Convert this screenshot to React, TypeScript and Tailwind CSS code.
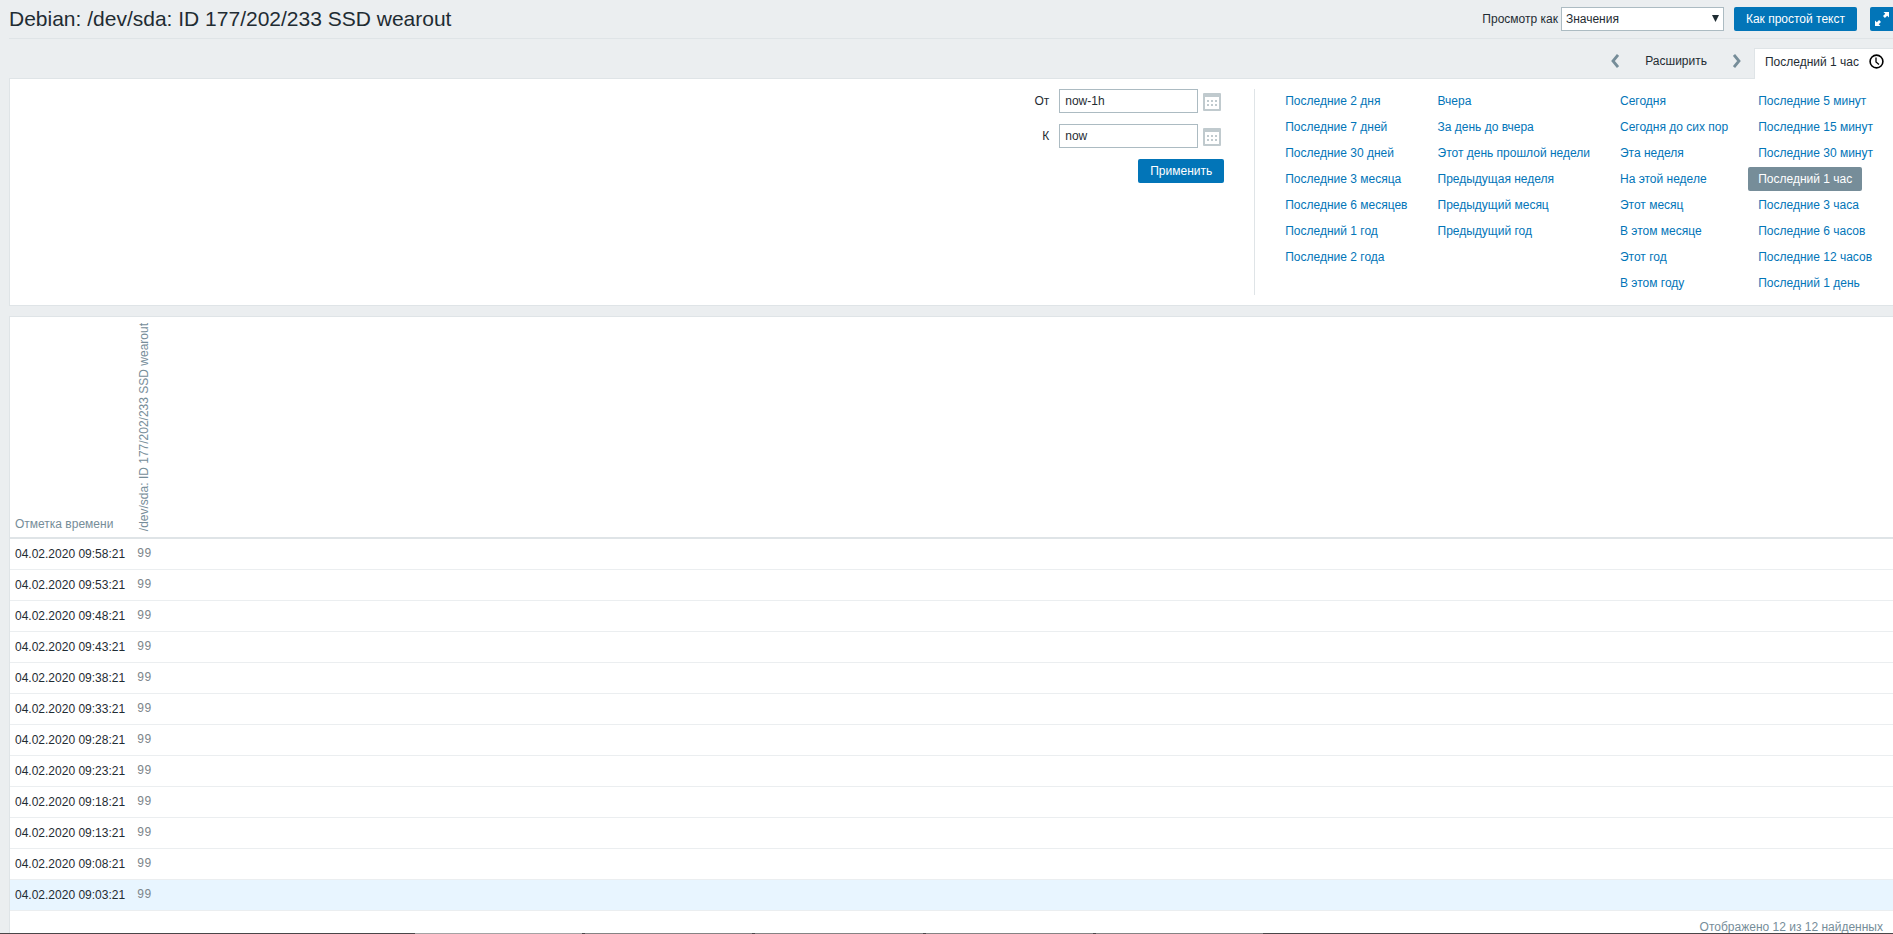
import type { ReactNode } from "react";

const ranges: string[][] = [
  [
    "Последние 2 дня",
    "Последние 7 дней",
    "Последние 30 дней",
    "Последние 3 месяца",
    "Последние 6 месяцев",
    "Последний 1 год",
    "Последние 2 года",
  ],
  [
    "Вчера",
    "За день до вчера",
    "Этот день прошлой недели",
    "Предыдущая неделя",
    "Предыдущий месяц",
    "Предыдущий год",
  ],
  [
    "Сегодня",
    "Сегодня до сих пор",
    "Эта неделя",
    "На этой неделе",
    "Этот месяц",
    "В этом месяце",
    "Этот год",
    "В этом году",
  ],
  [
    "Последние 5 минут",
    "Последние 15 минут",
    "Последние 30 минут",
    "Последний 1 час",
    "Последние 3 часа",
    "Последние 6 часов",
    "Последние 12 часов",
    "Последний 1 день",
  ],
];

const selectedRange = "Последний 1 час";

const rows = [
  "09:58:21",
  "09:53:21",
  "09:48:21",
  "09:43:21",
  "09:38:21",
  "09:33:21",
  "09:28:21",
  "09:23:21",
  "09:18:21",
  "09:13:21",
  "09:08:21",
  "09:03:21",
].map((time) => ({ clock: `04.02.2020 ${time}`, value: "99" }));

const CalendarIcon = () => (
  <svg width="18" height="18" viewBox="0 0 18 18" aria-hidden="true">
    <rect width="18" height="18" rx="1" fill="#c0cace" />
    <path d="M2 4h14v12H2z" fill="#fff" />
    <path
      d="M4 7h2v2H4zM8 7h2v2H8zM12 7h2v2h-2zM4 11h2v2H4zM8 11h2v2H8zM12 11h2v2h-2z"
      fill="#c0cace"
    />
  </svg>
);

const Chevron = ({ d }: { d: string }) => (
  <svg width="8" height="14" viewBox="0 0 8 14" fill="none" stroke="#768d99" strokeWidth="2.8" aria-hidden="true">
    <path d={d} />
  </svg>
);

const PrimaryButton = ({ children }: { children: ReactNode }) => (
  <button type="button" className="h-6 rounded-xs bg-[#0275b8] px-3 text-white hover:bg-[#02659f]">
    {children}
  </button>
);

const Header = () => (
  <header className="ml-[9px] flex h-[39px] items-center justify-between border-b border-[#dfe4e7]">
    <h1 className="text-[21px] leading-6">Debian: /dev/sda: ID 177/202/233 SSD wearout</h1>
    <div className="flex items-center">
      <label htmlFor="view-as" className="mr-[3px]">
        Просмотр как
      </label>
      <div className="relative mr-[10px]">
        <select
          id="view-as"
          className="h-6 w-[163px] appearance-none border border-[#acbbc2] bg-white pr-5 pl-1"
        >
          <option>Значения</option>
        </select>
        <svg
          className="pointer-events-none absolute top-2 right-[5px]"
          width="7"
          height="7"
          viewBox="0 0 7 7"
          aria-hidden="true"
        >
          <path d="M0 0h7L3.5 7z" fill="#1f2c33" />
        </svg>
      </div>
      <PrimaryButton>Как простой текст</PrimaryButton>
      <button
        type="button"
        aria-label="Полный экран"
        className="ml-[13px] flex h-6 w-[23px] items-center justify-center rounded-l-xs bg-[#0275b8]"
      >
        <svg width="14" height="14" viewBox="0 0 14 14" fill="#fff" aria-hidden="true">
          <path d="M8.5 0H14v5.5l-1.8-1.8L9.9 6 8 4.1l2.3-2.3zM5.5 14H0V8.5l1.8 1.8L4.1 8 6 9.9l-2.3 2.3z" />
        </svg>
      </button>
    </div>
  </header>
);

const TimeNav = () => (
  <nav className="mt-[9px] flex h-[30px] items-stretch justify-end">
    <div className="flex items-center pr-[13px] pb-1">
      <button type="button" aria-label="Назад">
        <Chevron d="M7 1L2 7l5 6" />
      </button>
      <button type="button" className="mx-[26px]">
        Расширить
      </button>
      <button type="button" aria-label="Вперёд">
        <Chevron d="M1 1l5 6-5 6" />
      </button>
    </div>
    <a
      href="#filter"
      className="z-10 -mb-px flex items-center gap-[10px] border-t border-l border-[#dfe4e7] bg-white pr-[9px] pb-[5px] pl-[10px]"
    >
      {selectedRange}
      <svg width="15" height="15" viewBox="0 0 15 15" fill="none" stroke="#000" aria-hidden="true">
        <circle cx="7.5" cy="7.5" r="6.4" strokeWidth="1.6" />
        <path d="M7 3.5V8l3 2.5" strokeWidth="1.3" />
      </svg>
    </a>
  </nav>
);

const DateField = ({ id, label, value }: { id: string; label: string; value: string }) => (
  <div className="flex items-center">
    <label htmlFor={id} className="mr-[10px]">
      {label}
    </label>
    <input
      id={id}
      type="text"
      defaultValue={value}
      className="h-6 w-[139px] border border-[#acbbc2] bg-white px-[5px]"
    />
    <button type="button" aria-label={`${label}: календарь`} className="mr-[3px] ml-[5px] pt-[2px]">
      <CalendarIcon />
    </button>
  </div>
);

const Filter = () => (
  <section
    id="filter"
    className="ml-[9px] flex justify-end border-y border-l border-[#dfe4e7] bg-white py-[10px] pr-[10px]"
  >
    <form className="flex flex-col items-end gap-[11px] pr-[30px]">
      <DateField id="from" label="От" value="now-1h" />
      <DateField id="to" label="К" value="now" />
      <PrimaryButton>Применить</PrimaryButton>
    </form>
    <div className="flex gap-[10px] border-l border-[#dfe4e7] pl-5">
      {ranges.map((column) => (
        <ul key={column[0]} className="flex flex-col items-start gap-[2px]">
          {column.map((label) => (
            <li key={label}>
              <a
                href="#filter"
                className={
                  label === selectedRange
                    ? "block rounded-xs bg-[#768d99] px-[10px] leading-6 whitespace-nowrap text-white"
                    : "block px-[10px] leading-6 whitespace-nowrap text-[#0275b8] hover:underline"
                }
              >
                {label}
              </a>
            </li>
          ))}
        </ul>
      ))}
    </div>
  </section>
);

const ValuesTable = () => (
  <section className="mt-[10px] ml-[9px] flex-1 border-t border-l border-[#dfe4e7] bg-white">
    <table className="w-full border-collapse text-left">
      <thead>
        <tr className="border-b-2 border-[#dfe4e7] text-[#768d99]">
          <th className="w-[122px] px-[5px] py-[6px] align-bottom font-normal whitespace-nowrap">
            Отметка времени
          </th>
          <th className="px-[5px] py-[6px] align-bottom font-normal">
            <span className="block rotate-180 whitespace-nowrap [writing-mode:vertical-rl]">
              /dev/sda: ID 177/202/233 SSD wearout
            </span>
          </th>
        </tr>
      </thead>
      <tbody>
        {rows.map((row) => (
          <tr key={row.clock} className="h-[31px] border-b border-[#ebeef0] last:bg-[#e8f5ff]">
            <td className="px-[5px] whitespace-nowrap">{row.clock}</td>
            <td className="px-[5px]">
              <pre className="font-['Liberation_Mono',monospace] text-[12px] text-[#7d868b]">{row.value}</pre>
            </td>
          </tr>
        ))}
      </tbody>
    </table>
    <p className="h-[22px] overflow-hidden pt-[9px] pr-[10px] text-right text-[#768d99]">
      Отображено 12 из 12 найденных
    </p>
  </section>
);

const Taskbar = () => (
  <footer className="flex h-px shrink-0 gap-[3px] bg-[#4a4648] pr-[630px] pl-[415px]">
    <div className="flex-1 bg-[#a5a3a4]" />
    <div className="flex-1 bg-[#858384]" />
    <div className="flex-1 bg-[#858384]" />
    <div className="flex-1 bg-[#858384]" />
    <div className="flex-1 bg-[#858384]" />
  </footer>
);

export default function App() {
  return (
    <div className="flex min-h-screen flex-col bg-[#ebeef0] font-['Liberation_Sans',Arial,sans-serif] text-[12px] leading-[14px] text-[#1f2c33]">
      <Header />
      <TimeNav />
      <Filter />
      <ValuesTable />
      <Taskbar />
    </div>
  );
}
